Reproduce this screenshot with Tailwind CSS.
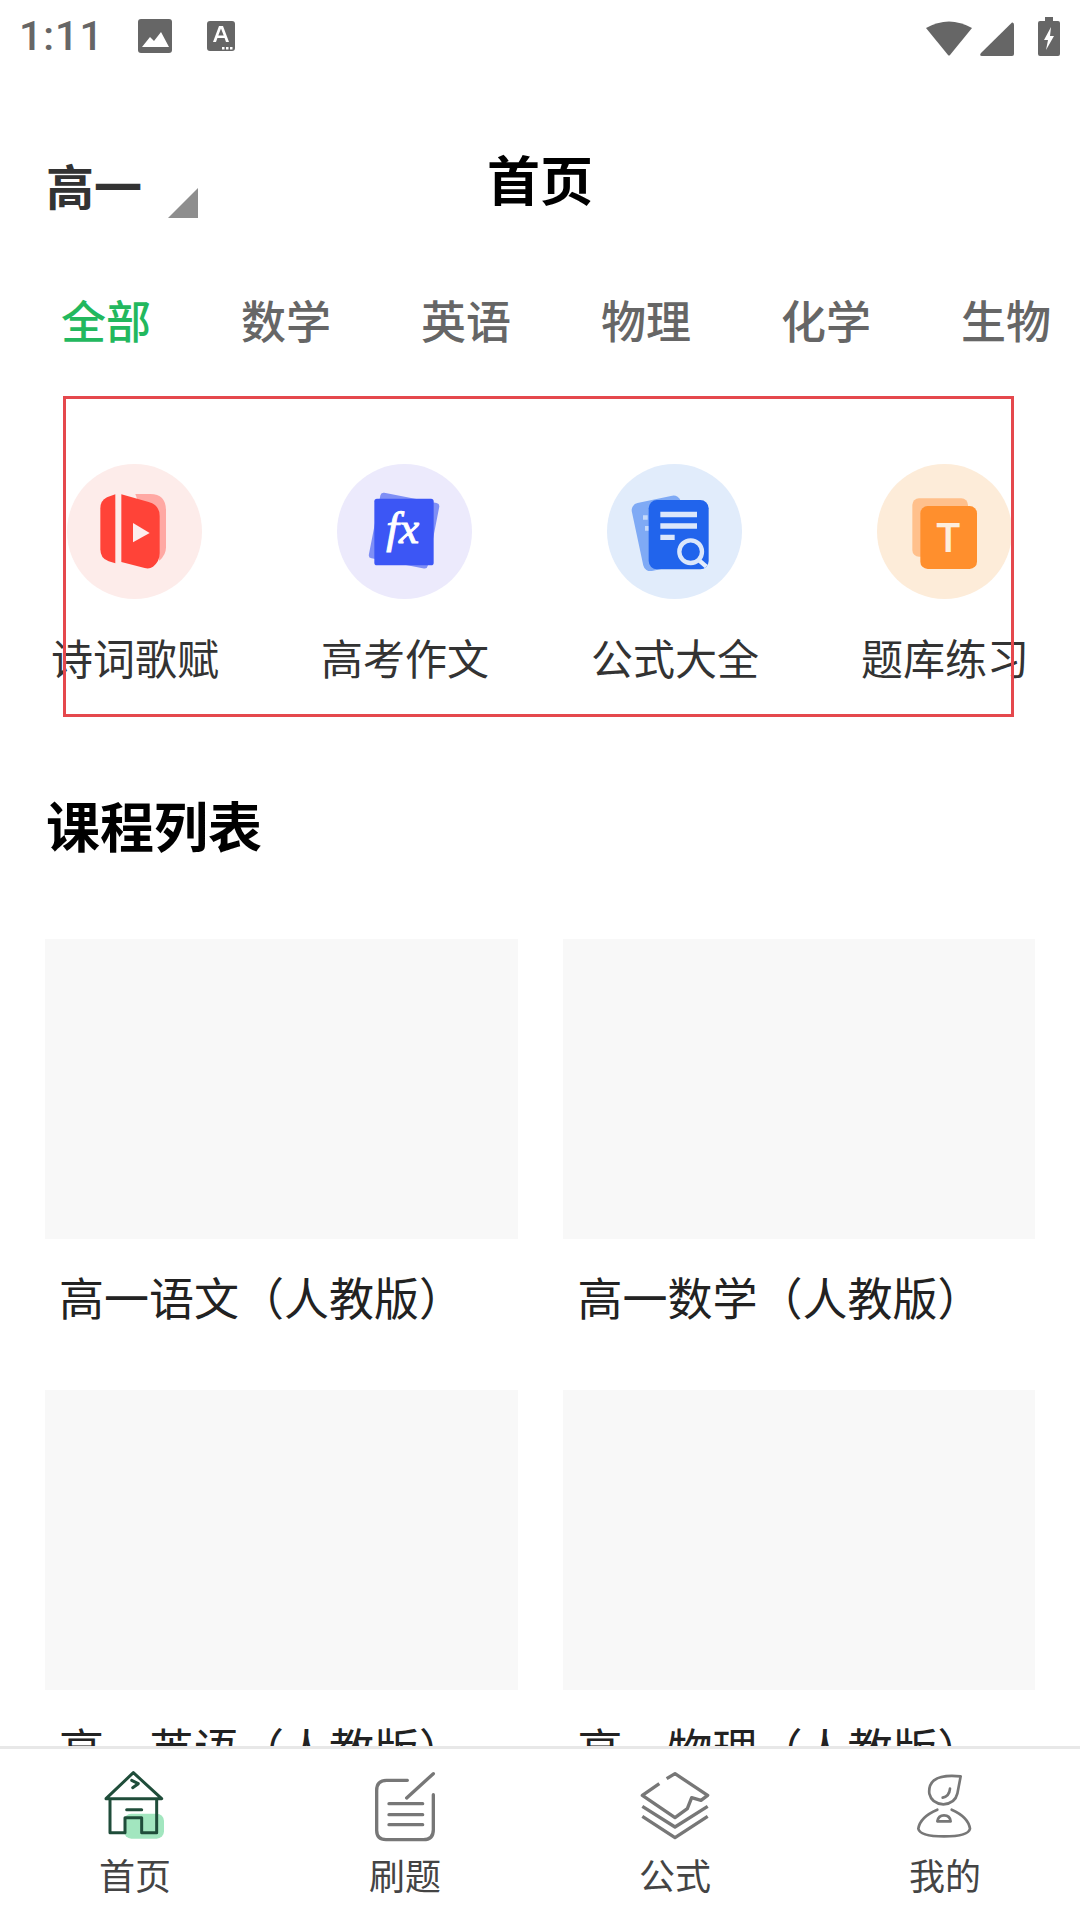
<!DOCTYPE html>
<html lang="zh-CN">
  <head>
    <meta charset="utf-8" />
    <meta content="width=device-width, initial-scale=1.0" name="viewport" />
    <title>首页</title>
    <script src="https://cdn.jsdelivr.net/npm/@tailwindcss/browser@4"></script>
  </head>
  <body class="bg-white">
    <div class="relative flex h-[1920px] w-[1080px] flex-col overflow-hidden bg-white font-['Noto_Sans_CJK_SC','Noto_Sans',sans-serif]">
      <!-- status bar -->
      <div class="flex h-[72px] shrink-0 items-center pl-[19px] text-[#666]">
        <span class="w-[119px] font-['Roboto',sans-serif] text-[41px] font-medium leading-[41px] tracking-[1px]">1:11</span>
        <svg class="h-[34px] w-[34px]" viewBox="0 0 34 34">
          <rect width="34" height="34" rx="3" fill="#666" />
          <path d="M4 28 L12 18 L16 22 L23 13 L31 28 Z" fill="#fff" />
        </svg>
        <svg class="ml-[35px] h-[30px] w-[28px]" viewBox="0 0 28 30">
          <rect width="28" height="30" rx="3" fill="#666" />
          <path d="M6 21 L12 5 H16 L22 21 H19 L17.6 17 H10.4 L9 21 Z M11.3 14.5 H16.7 L14 7.5 Z" fill="#fff" fill-rule="evenodd" />
          <path d="M15 26 h2.5 v2.5 h-2.5z M19 26 h2.5 v2.5 h-2.5z M23 26 h2.5 v2.5 h-2.5z" fill="#fff" />
        </svg>
        <div class="ml-auto flex items-end">
          <svg class="h-[36px] w-[46px]" viewBox="0 0 46 36">
            <path d="M0 8 Q23 -5 46 8 L24 35 Q23 36 22 35 Z" fill="#666" />
          </svg>
          <svg class="ml-[8px] h-[34px] w-[34px]" viewBox="0 0 34 34">
            <path d="M32 0.5 Q34 0 34 3 V32 Q34 34 32 34 H2 Q-1 34 1 31 Z" fill="#666" />
          </svg>
          <svg class="ml-[24px] mr-[20px] h-[39px] w-[22px]" viewBox="0 0 22 39">
            <path d="M7 0 H15 V4 H20 Q22 4 22 6 V37 Q22 39 20 39 H2 Q0 39 0 37 V6 Q0 4 2 4 H7 Z" fill="#666" />
            <path d="M13 10 L6 23 H10 L8 33 L16 19 H12 Z" fill="#fff" />
          </svg>
        </div>
      </div>

      <!-- title row -->
      <div class="relative flex h-[200px] shrink-0 items-start pl-[46px] pt-[88px]">
        <span class="text-[48px] font-bold leading-[48px] text-[#333]">高一</span>
        <svg class="ml-[26px] mt-[28px] h-[30px] w-[30px]" viewBox="0 0 30 30">
          <path d="M30 0 V30 H0 Z" fill="#8e8e8e" />
        </svg>
        <span class="absolute left-[487px] top-[80px] text-[53px] font-bold leading-[53px] text-black">首页</span>
      </div>

      <!-- subject tabs -->
      <div class="flex h-[192px] shrink-0 items-start gap-[90px] overflow-hidden pl-[61px] pt-[25px] text-[45px] font-medium leading-[45px] text-[#666]">
        <span class="shrink-0 text-[#22b85e]">全部</span>
        <span class="shrink-0">数学</span>
        <span class="shrink-0">英语</span>
        <span class="shrink-0">物理</span>
        <span class="shrink-0">化学</span>
        <span class="shrink-0">生物</span>
      </div>

      <!-- shortcuts -->
      <div class="grid shrink-0 grid-cols-4 text-[42px] leading-[42px] text-[#333]">
        <div class="flex flex-col items-center">
          <div class="h-[135px] w-[135px] -translate-x-px rounded-full bg-[#fdecea]">
            <svg class="h-[135px] w-[135px]" viewBox="55 72 405 405">
              <path d="M260 162 H305 Q352 162 352 212 V322 Q352 345 332 362 Z" fill="#ffa8a3" />
              <path d="M200 163 V370 L180 364 Q155 356 155 328 V205 Q155 182 175 172 Z" fill="#ff4338" />
              <path d="M218 163 L300 186 Q333 195 333 228 V340 Q333 365 313 380 Q302 388 288 384 L218 366 Z" fill="#ff4338" />
              <path d="M253 249 L303 279 L253 307 Z" fill="#fdeeee" />
            </svg>
          </div>
          <span class="mt-[37px] whitespace-nowrap">诗词歌赋</span>
        </div>
        <div class="flex flex-col items-center">
          <div class="h-[135px] w-[135px] -translate-x-px rounded-full bg-[#eceafc]">
            <svg class="h-[135px] w-[135px]" viewBox="862 72 405 405">
              <rect x="973" y="172" width="180" height="200" rx="10" fill="#7f8ff5" transform="rotate(11 1063 273)" />
              <rect x="974" y="176" width="178" height="200" rx="8" fill="#3c56f5" />
              <text x="1010" y="308" fill="#fff" stroke="#fff" stroke-width="3" font-family="Liberation Serif, serif" font-style="italic" font-size="136">fx</text>
            </svg>
          </div>
          <span class="mt-[37px] whitespace-nowrap">高考作文</span>
        </div>
        <div class="flex flex-col items-center">
          <div class="h-[135px] w-[135px] -translate-x-px rounded-full bg-[#e1ecfb]">
            <svg class="h-[135px] w-[135px]" viewBox="142 72 405 405">
              <rect x="232" y="176" width="150" height="208" rx="22" fill="#7faaf5" transform="rotate(-12 307 280)" />
              <path d="M250 226 h14 v13 h-14z M256 258 h12 v14 h-12z" fill="#c5d9fa" />
              <rect x="267" y="180" width="180" height="208" rx="25" fill="#2164ec" />
              <path d="M302 215 H412 V232 H302 Z M302 250 H412 V266 H302 Z M302 284 H345 V300 H302 Z" fill="#dce7fb" />
              <path d="M415 358 L440 380" stroke="#e4edfc" stroke-width="13" />
              <circle cx="393" cy="335" r="34" fill="#2164ec" stroke="#dbe7fb" stroke-width="13" />
            </svg>
          </div>
          <span class="mt-[37px] whitespace-nowrap">公式大全</span>
        </div>
        <div class="flex flex-col items-center">
          <div class="h-[135px] w-[135px] -translate-x-px rounded-full bg-[#fdecd9]">
            <svg class="h-[135px] w-[135px]" viewBox="952 72 405 405">
              <rect x="1058" y="175" width="167" height="175" rx="20" fill="#ffc08c" />
              <rect x="1082" y="198" width="170" height="189" rx="22" fill="#ff8f2d" />
              <text x="1166" y="335" text-anchor="middle" fill="#fdeedd" font-family="Inter, sans-serif" font-weight="600" font-size="118">T</text>
            </svg>
          </div>
          <span class="mt-[37px] whitespace-nowrap">题库练习</span>
        </div>
      </div>

      <!-- course list -->
      <div class="min-h-0 flex-1 overflow-hidden">
        <h2 class="pl-[46px] pt-[120px] text-[54px] font-bold leading-[54px] text-black">课程列表</h2>
        <div class="mt-[87px] grid grid-cols-2 gap-x-[45px] px-[45px] text-[45px] leading-[45px] text-[#222]">
          <div class="h-[451px]">
            <div class="h-[300px] bg-[#f8f8f8]"></div>
            <p class="pl-[14px] pt-[35px] whitespace-nowrap">高一语文（人教版）</p>
          </div>
          <div class="h-[451px]">
            <div class="h-[300px] bg-[#f8f8f8]"></div>
            <p class="pl-[15px] pt-[35px] whitespace-nowrap">高一数学（人教版）</p>
          </div>
          <div class="h-[451px]">
            <div class="h-[300px] bg-[#f8f8f8]"></div>
            <p class="pl-[14px] pt-[35px] whitespace-nowrap">高一英语（人教版）</p>
          </div>
          <div class="h-[451px]">
            <div class="h-[300px] bg-[#f8f8f8]"></div>
            <p class="pl-[15px] pt-[35px] whitespace-nowrap">高一物理（人教版）</p>
          </div>
        </div>
      </div>

      <!-- bottom nav -->
      <div class="grid h-[174px] shrink-0 grid-cols-4 border-t-[3px] border-[#e8e8e8] bg-white pt-[18px] text-[36px] leading-[36px] text-[#444]">
        <div class="flex flex-col items-center">
          <svg class="h-[80px] w-[80px]" viewBox="105 200 240 240" fill="none" stroke-linecap="round" stroke-linejoin="round">
            <rect x="192" y="340" width="120" height="75" rx="22" fill="#a2e6bf" />
            <g stroke="#1f4d3a" stroke-width="9">
              <path d="M138 295 L220 217 L305 295 Z" />
              <path d="M150 298 V397 H195 V352 H245 V397 H290 V298" />
              <path d="M200 328 H245" />
              <path d="M215 240 L235 250 L218 262" />
            </g>
          </svg>
          <span class="mt-[9px]">首页</span>
        </div>
        <div class="flex flex-col items-center">
          <svg class="h-[80px] w-[80px]" viewBox="915 200 240 240" fill="none" stroke="#777" stroke-width="10" stroke-linecap="round" stroke-linejoin="round">
            <path d="M1042 240 H980 Q950 240 950 270 V390 Q950 418 978 418 H1090 Q1120 418 1120 388 V283" />
            <path d="M1040 293 L1120 220" />
            <path d="M987 310 H1088 M987 343 H1088 M987 373 H1088" />
          </svg>
          <span class="mt-[9px]">刷题</span>
        </div>
        <div class="flex flex-col items-center">
          <svg class="h-[80px] w-[80px]" viewBox="105 200 240 240" fill="none" stroke="#777" stroke-width="10" stroke-linejoin="round">
            <path d="M200 235 L225 220 L323 285 L303 300 L275 292 L262 325 L225 352 L127 285 L178 250" />
            <path d="M127 318 L225 380 L323 318" />
            <path d="M127 348 L225 412 L323 348" />
          </svg>
          <span class="mt-[9px]">公式</span>
        </div>
        <div class="flex flex-col items-center">
          <svg class="h-[80px] w-[80px]" viewBox="915 200 240 240" fill="none" stroke="#777" stroke-width="8" stroke-linecap="round" stroke-linejoin="round">
            <path d="M1082 228 Q1025 222 1002 240 Q985 255 988 280 Q995 310 1030 312 Q1065 310 1072 280 Z" />
            <path d="M1028 292 Q1048 288 1050 265" />
            <path d="M1012 328 Q960 350 955 385 Q960 408 1032 408 Q1105 408 1110 385 Q1105 350 1055 328" />
            <path d="M1012 363 Q1015 345 1032 345 Q1050 345 1052 363 Z" />
          </svg>
          <span class="mt-[9px]">我的</span>
        </div>
      </div>

      <!-- red annotation box over the shortcuts -->
      <div class="absolute left-[63px] top-[396px] h-[321px] w-[951px] border-[3px] border-[#e5484d]"></div>
    </div>
  </body>
</html>
